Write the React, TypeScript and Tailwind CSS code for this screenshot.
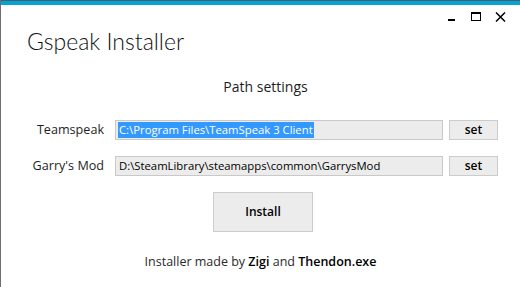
const font = { fontFamily: '"Open Sans", "Noto Sans", sans-serif' };

function PathRow({ label, value, selected }: { label: string; value: string; selected?: boolean }) {
  return (
    <div className="flex items-center h-[20px]">
      <div className="w-[103px] text-right text-[12.6px] text-[#1e1e1e]">{label}</div>
      <div className="ml-[11px] w-[328px] h-[20px] border border-[#c9c9c9] bg-[#ececec] flex items-center pl-[2px] text-[11.3px] text-black overflow-hidden whitespace-nowrap">
        {selected ? <span className="bg-[#3399ff] text-white px-px leading-[16px]">{value}</span> : <span className="pl-px">{value}</span>}
      </div>
      <button className="ml-[6px] w-[49px] h-[20px] border border-[#cccccc] bg-[#ececec] text-[12px] font-semibold text-black">set</button>
    </div>
  );
}

export default function App() {
  return (
    <div className="w-[520px] h-[287px] bg-white flex flex-col border-l border-[#6e6e6e] overflow-hidden" style={font}>
      <div className="h-px bg-[#4f5a64]" />
      <div className="h-[4px] bg-[#00a5d5]" />
      <div className="flex justify-between">
        <div className="pl-[26px] pt-[20px] text-[23px] font-light text-[#111] leading-[32px]" style={{ fontFamily: 'Lato, "Open Sans", sans-serif' }}>
          Gspeak Installer
        </div>
        <div className="flex items-start pr-[14px] pt-[7px]">
          <div className="w-[7px] h-[9px] flex items-end"><div className="w-[7px] h-[2px] bg-black" /></div>
          <div className="ml-[16px] w-[10px] h-[9px] border border-black border-t-2" />
          <svg className="ml-[14px]" width="11" height="10" viewBox="0 0 11 10">
            <path d="M1 0.5 L10 9.5 M10 0.5 L1 9.5" stroke="black" strokeWidth="1.5" />
          </svg>
        </div>
      </div>
      <div className="mt-[19px] text-center text-[14px] text-[#1e1e1e] pl-[10px]">Path settings</div>
      <div className="mt-[23px] flex flex-col gap-[16px]">
        <PathRow label="Teamspeak" value="C:\Program Files\TeamSpeak 3 Client" selected />
        <PathRow label="Garry's Mod" value="D:\SteamLibrary\steamapps\common\GarrysMod" />
      </div>
      <div className="mt-[16px] flex pl-[212px]">
        <button className="w-[100px] h-[40px] border border-[#cccccc] bg-[#ececec] text-[12px] font-semibold text-black">Install</button>
      </div>
      <div className="mt-[21px] text-center text-[12.5px] text-[#2a2a2a]">
        Installer made by <span className="font-semibold text-black">Zigi</span> and <span className="font-semibold text-black">Thendon.exe</span>
      </div>
    </div>
  );
}
